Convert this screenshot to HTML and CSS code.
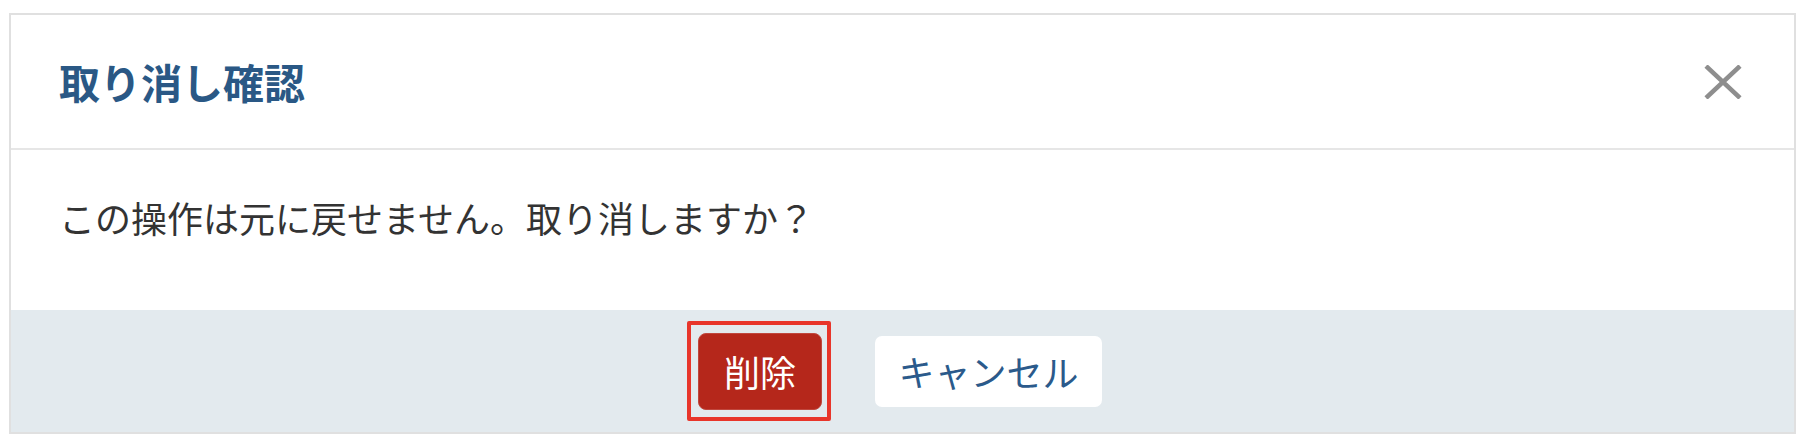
FILE: index.html
```html
<!DOCTYPE html>
<html lang="ja">
<head>
<meta charset="utf-8">
<title>取り消し確認</title>
<link rel="stylesheet" href="styles.css">
</head>
<body>
<div class="modal">
  <div class="modal-header">
    <h2 class="modal-title">取り消し確認</h2>
    <button class="close-btn" aria-label="閉じる">
      <svg width="38" height="34" viewBox="0 0 38 34"><path d="M2 1 L36 33 M36 1 L2 33" stroke="#8e8e8e" stroke-width="4.5" fill="none"/></svg>
    </button>
  </div>
  <div class="modal-body">この操作は元に戻せません。取り消しますか？</div>
  <div class="modal-footer">
    <button class="btn btn-danger">削除</button>
    <button class="btn btn-cancel">キャンセル</button>
  </div>
</div>
</body>
</html>
```
FILE: styles.css
```css
html, body {
  margin: 0;
  background: #ffffff;
}
body {
  padding: 13px 14px 12px 9px;
  font-family: "Noto Sans CJK JP", "Noto Sans", sans-serif;
}
.modal {
  border: 2px solid #e0e0e0;
  background: #ffffff;
  height: 421px;
  box-sizing: border-box;
  display: flex;
  flex-direction: column;
}
.modal-header {
  height: 135px;
  box-sizing: border-box;
  border-bottom: 2px solid #e6e6e6;
  display: flex;
  align-items: center;
  justify-content: space-between;
  padding: 0 52px 0 48px;
}
.modal-title {
  margin: 0;
  font-size: 41px;
  font-weight: 700;
  color: #2a5885;
  line-height: 1.3;
}
.close-btn {
  border: none;
  background: none;
  padding: 0;
  width: 38px;
  height: 34px;
  display: flex;
  cursor: pointer;
}
.modal-body {
  padding: 40px 48px 66px;
  font-size: 36px;
  line-height: 54px;
  color: #333333;
}
.modal-footer {
  flex: 1;
  background: #e3eaee;
  display: flex;
  align-items: center;
  justify-content: center;
  gap: 53px;
  padding-right: 5px;
}
.btn {
  font-family: "Noto Sans CJK JP", "Noto Sans", sans-serif;
  font-size: 36px;
  border-radius: 8px;
  cursor: pointer;
  box-sizing: border-box;
  padding: 0;
  line-height: 1;
}
.btn-danger {
  position: relative;
  width: 124px;
  height: 77px;
  background: #b5271b;
  color: #ffffff;
  border: 1px solid #c0473d;
}
.btn-danger::after {
  content: "";
  position: absolute;
  top: -13px;
  left: -12px;
  right: -10px;
  bottom: -12px;
  border: 4px solid #e8352a;
  border-radius: 2px;
  pointer-events: none;
}
.btn-cancel {
  width: 227px;
  height: 71px;
  background: #ffffff;
  color: #2b5a8b;
  border: none;
  border-radius: 7px;
}
```
